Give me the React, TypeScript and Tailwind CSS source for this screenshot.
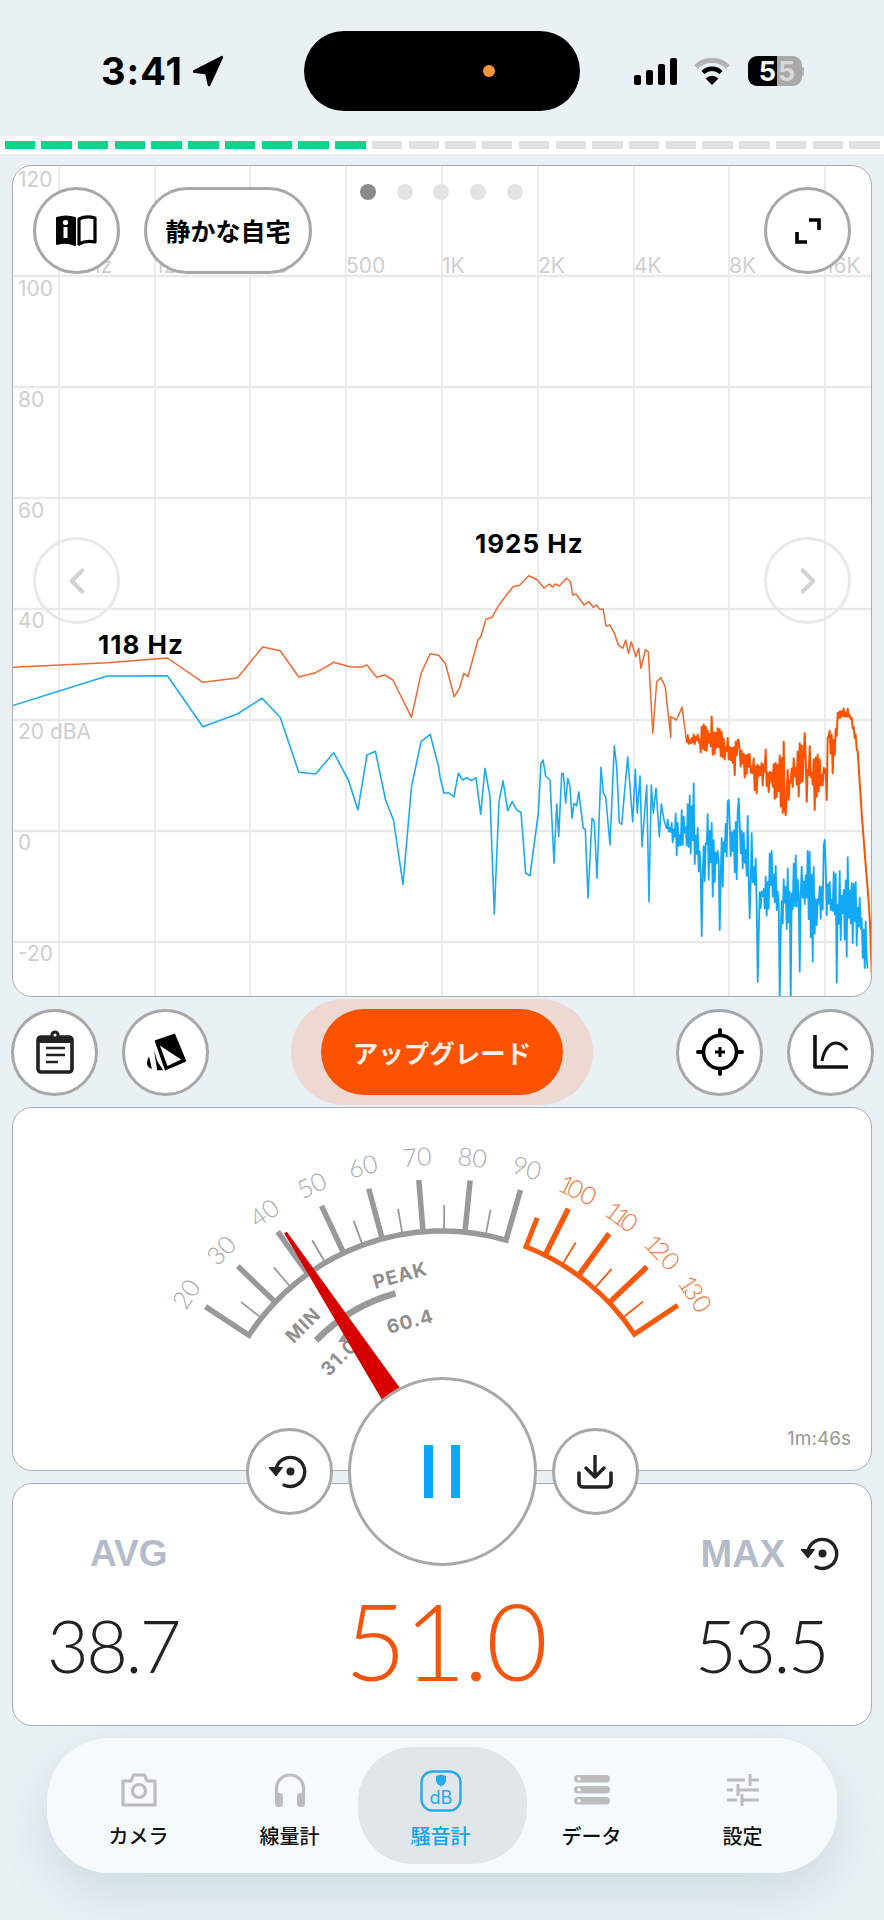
import type { ReactNode } from 'react'
import { ChevronLeft, ChevronRight } from 'lucide-react'

type Pt = [number, number]
type Env = [number, number, number]

// zoomed traces of the two spectrum lines, converted to page pixels below
const wide = ([x, y]: Pt): Pt => [x / 1.774, y / 3 + 500]
const fine = ([x, y]: Pt): Pt => [x / 3 + 440, y / 3 + 680]

const orangeLow: Pt[] = [[22,502],[190,488],[297,474],[360,547],[421,534],[466,441],[497,452],[530,531],[560,518],[592,487],[620,500],[640,502],[651,495],[668,532],[682,525],[697,540],[730,652],[747,520],[763,461],[778,466],[790,490],[806,590],[815,565],[823,520],[830,530],[848,420],[853,410],[862,358],[873,352],[885,315],[910,260],[922,256],[938,227],[952,238],[965,264],[975,252],[980,262],[985,252],[992,258],[1005,235],[1012,245],[1016,285],[1022,282],[1036,315],[1045,305],[1052,322],[1058,315],[1064,328],[1070,328],[1075,378],[1082,375],[1090,400],[1097,435],[1105,445],[1110,420],[1115,460],[1120,425],[1128,470],[1133,445],[1137,505],[1145,450],[1150,455],[1158,700],[1165,545],[1172,533],[1180,560],[1190,712],[1190,650],[1200,660],[1210,622]]
const orangeEnv: Env[] = [[740,165,210],[770,150,210],[815,110,240],[860,165,240],[900,180,280],[950,235,340],[975,205,340],[1005,250,370],[1030,185,405],[1050,250,360],[1080,190,350],[1095,160,380],[1130,220,390],[1160,180,355],[1165,140,180],[1180,145,280],[1195,75,120],[1225,80,120],[1240,120,150],[1255,210,250]]
const orangeSpikes: Pt[] = [[815,110],[885,285],[895,180],[950,340],[1030,185],[1036,405],[1080,190],[1095,160],[1125,390],[1160,360],[1178,280]]
const orangeEnd: Pt[] = [[1265,400],[1275,530],[1285,650],[1290,730],[1295,880]]

const blueLow: Pt[] = [[22,617],[190,528],[297,527],[360,680],[421,642],[465,595],[497,652],[530,817],[560,822],[592,758],[618,840],[635,930],[651,765],[666,754],[684,900],[698,960],[715,1153],[730,860],[747,725],[763,703],[778,800]]
const blueMid: Pt[] = [[0,290],[12,340],[25,338],[42,350],[55,280],[68,300],[80,293],[95,302],[108,293],[122,403],[135,265],[150,350],[163,703],[177,365],[189,302],[203,392],[217,365],[230,390],[243,397],[257,580],[270,587],[295,400],[303,250],[309,240],[317,288],[330,300],[342,550],[350,372],[356,470],[365,282],[370,280],[377,370],[383,295],[390,320],[396,415],[402,370],[410,378],[416,335],[430,445],[436,447],[444,655],[456,415],[463,425],[471,595],[483,262],[490,340],[497,350],[510,495],[523,198],[530,260],[538,428],[545,433],[563,230],[578,425],[586,268],[592,400],[600,288],[606,500],[620,315],[627,665],[634,315],[640,400],[648,325],[658,470],[664,372],[672,420]]
const blueEnv: Env[] = [[680,395,495],[720,395,550],[760,310,530],[785,480,700],[800,395,580],[830,390,700],[865,360,600],[900,355,600],[940,440,700],[950,550,800],[1000,475,720],[1020,530,800],[1050,535,800],[1065,490,780],[1095,495,790],[1130,545,800],[1155,480,800],[1190,560,800],[1230,515,800],[1260,590,820],[1275,680,870],[1285,880,920]]
const blueSpikes: Pt[] = [[760,310],[785,768],[838,750],[865,360],[895,355],[930,715],[952,905],[1020,955],[1052,955],[1080,875],[1117,845],[1155,480],[1190,908],[1220,830]]

function noisy(env: Env[], spikes: Pt[], seed: number): Pt[] {
  const out: Pt[] = []
  let s = seed
  const rnd = () => {
    s = (s * 16807) % 2147483647
    return s / 2147483647
  }
  let k = 0
  let i = 0
  for (let x = env[0][0]; x <= env[env.length - 1][0]; x += 3) {
    while (k < env.length - 2 && env[k + 1][0] < x) k++
    const t = (x - env[k][0]) / (env[k + 1][0] - env[k][0])
    const up = env[k][1] + (env[k + 1][1] - env[k][1]) * t
    const lo = env[k][2] + (env[k + 1][2] - env[k][2]) * t
    const mid = (up + lo) / 2
    const swing = ((lo - up) / 2) * Math.pow(rnd(), 1.2)
    const spike = spikes.find((p) => Math.abs(p[0] - x) <= 1.5)
    out.push([x, spike ? spike[1] : i % 2 ? mid - swing : mid + swing])
    i++
  }
  return out
}

const toPath = (pts: Pt[]) => 'M' + pts.map((p) => p[0].toFixed(1) + ' ' + p[1].toFixed(1)).join('L')

const orangeDense = noisy(orangeEnv, orangeSpikes, 4021).map(fine)
const blueDense = noisy(blueEnv, blueSpikes, 9173).map(fine)
const orangeThin = toPath([...orangeLow.map(wide), orangeDense[0]])
const orangeThick = toPath([...orangeDense, ...orangeEnd.map(fine)])
const blueThin = toPath([...blueLow.map(wide), ...blueMid.map(fine), blueDense[0]])
const blueThick = toPath(blueDense)

const gridX = [59, 155, 250, 346, 442, 538, 634, 729, 825]
const gridY = [276, 387, 498, 609, 720, 831, 942]
const dbLabels = [['120', 187], ['100', 296], ['80', 407], ['60', 518], ['40', 628], ['20 dBA', 739], ['0', 850], ['-20', 961]] as const
const freqLabels = ['63Hz', '125', '250', '500', '1K', '2K', '4K', '8K', '16K']

// gauge geometry, measured off the reference
const CX = 442
const CY = 1462
const polar = (r: number, deg: number): Pt => {
  const a = (deg * Math.PI) / 180
  return [CX + r * Math.sin(a), CY - r * Math.cos(a)]
}
const majors = [-56.7, -46.2, -35.5, -25.2, -15, -4.7, 5.7, 16.1, 26.5, 36.2, 46.4, 56.4]
const majorLabels = ['20', '30', '40', '50', '60', '70', '80', '90', '100', '110', '120', '130']
const GREY = '#999999'
const ORANGE = '#f9590d'
const line = (r1: number, r2: number, deg: number) => {
  const a = polar(r1, deg)
  const b = polar(r2, deg)
  return 'M' + a[0] + ' ' + a[1] + 'L' + b[0] + ' ' + b[1]
}
const arcShape = (from: number, to: number, startR = 283) => {
  const a = polar(startR, from)
  const b = polar(231, from)
  const c = polar(231, to)
  const d = polar(283, to)
  return `M${a[0]} ${a[1]}L${b[0]} ${b[1]}A231 231 0 0 1 ${c[0]} ${c[1]}L${d[0]} ${d[1]}`
}
const peakStart = polar(175, -46)
const peakEnd = polar(175, -15.4)

function Round({ children, className = 'w-[87px]' }: { children?: ReactNode; className?: string }) {
  return (
    <div className={`flex h-[87px] shrink-0 items-center justify-center rounded-full border-[3px] border-[#a8a8a8] bg-white ${className}`}>
      {children}
    </div>
  )
}

function ResetIcon({ className }: { className?: string }) {
  return (
    <svg viewBox="0 0 40 36" className={className}>
      <path d="M7 15A14.5 14.5 0 1 1 15 31" fill="none" stroke="#222" strokeWidth="3.4" strokeLinecap="round" />
      <path d="M0 13.5H13.5L7 22Z" fill="#222" stroke="#222" strokeLinejoin="round" />
      <circle cx="21.5" cy="17.5" r="4" fill="#222" />
    </svg>
  )
}

function StatusBar() {
  return (
    <div className="flex h-[136px] items-start pt-[31px]">
      <div className="flex h-[80px] w-[304px] items-center pl-[101px]">
        <span className="text-[38px] font-bold leading-none tracking-[1px] text-black [font-family:Inter,sans-serif]">3:41</span>
        <svg viewBox="0 0 30 30" className="ml-[9px] h-[32px] w-[32px]">
          <path d="M28 2L2 15.5L13.5 17L16 28Z" fill="#000" stroke="#000" strokeWidth="2.5" strokeLinejoin="round" />
        </svg>
      </div>
      <div className="flex h-[80px] w-[276px] items-center rounded-full bg-black pl-[179px]">
        <div className="h-[12px] w-[12px] rounded-full bg-[#f7963a]" />
      </div>
      <div className="flex h-[80px] items-center pl-[54px]">
        <div className="flex h-[27px] items-end gap-[5px]">
          <div className="h-[10px] w-[7px] rounded-[2px] bg-black" />
          <div className="h-[15px] w-[7px] rounded-[2px] bg-black" />
          <div className="h-[21px] w-[7px] rounded-[2px] bg-black" />
          <div className="h-[27px] w-[7px] rounded-[2px] bg-black" />
        </div>
        <svg viewBox="0 0 38 28" className="ml-[16px] h-[28px] w-[38px]">
          <path d="M3 10C12 1 26 1 35 10" fill="none" stroke="#b3b3b3" strokeWidth="5" />
          <path d="M10 15.5C15 10.5 23 10.5 28 15.5" fill="none" stroke="#000" strokeWidth="4.5" />
          <path d="M12.5 21.5Q19 16 25.5 21.5L19 28Z" fill="#000" />
        </svg>
        <div className="ml-[17px] flex h-[30px] w-[54px] overflow-hidden rounded-[9px] text-[27px] font-bold leading-none [font-family:Inter,sans-serif]">
          <div className="flex w-[29px] items-center justify-end bg-black pr-[1px] text-white">5</div>
          <div className="flex flex-1 items-center bg-[#a9a9a9] pl-[1px] text-[#d9d9d9]">5</div>
        </div>
        <div className="h-[9px] w-[2px] rounded-r-full bg-[#b3b3b3]" />
      </div>
    </div>
  )
}

function ProgressStrip() {
  return (
    <div className="flex h-[18px] items-center gap-[6.35px] bg-white pl-[4.5px]">
      {Array.from({ length: 24 }, (_, i) => (
        <div key={i} className={`h-[8px] w-[30.4px] shrink-0 ${i < 10 ? 'bg-[#0fd38a]' : 'bg-[#e0e0e0]'}`} />
      ))}
    </div>
  )
}

function SpectrumChart() {
  return (
    <div className="relative mx-[12px] mt-[11px] h-[832px] overflow-hidden rounded-[20px] border border-[#a9adb0] bg-white">
      <svg viewBox="13 166 858 830" className="block h-full w-full">
        {gridX.map((x) => (
          <line key={x} x1={x} x2={x} y1={166} y2={996} stroke="#ececec" strokeWidth="2" />
        ))}
        {gridY.map((y) => (
          <line key={y} x1={13} x2={871} y1={y} y2={y} stroke="#e9e9e9" strokeWidth="2.5" />
        ))}
        <g fill="#cfcfcf" fontSize="21" fontFamily="Inter, sans-serif">
          {dbLabels.map(([t, y]) => (
            <text key={t} x={18} y={y}>{t}</text>
          ))}
          {freqLabels.map((t, i) => (
            <text key={t} x={gridX[i]} y={273}>{t}</text>
          ))}
        </g>
        <g fill="none" strokeLinejoin="round">
          <path d={orangeThin} stroke="#ee6a32" strokeWidth="1.5" />
          <path d={orangeThick} stroke="#fb5200" strokeWidth="2" />
          <path d={blueThin} stroke="#1eaaf1" strokeWidth="1.6" />
          <path d={blueThick} stroke="#12a8f6" strokeWidth="1.8" />
        </g>
        <g fill="#000" fontSize="26" fontWeight="700" letterSpacing="1" fontFamily="Inter, sans-serif">
          <text x={475} y={553}>1925 Hz</text>
          <text x={98} y={654}>118 Hz</text>
        </g>
      </svg>

      <div className="absolute left-[20px] right-[20px] top-[21px] flex items-start gap-[24px]">
        <Round>
          <svg viewBox="0 0 41 31" className="h-[31px] w-[41px]">
            <path d="M1 3Q10 0 19 3V30Q10 26 1 29Z" fill="#000" stroke="#000" strokeWidth="2" strokeLinejoin="round" />
            <circle cx="9.5" cy="7.5" r="2.6" fill="#fff" />
            <rect x="7.5" y="12" width="4" height="11" fill="#fff" />
            <path d="M23 4Q30 0.5 39 3V27Q30 25 23 29Z" fill="none" stroke="#000" strokeWidth="3.2" strokeLinejoin="round" />
          </svg>
        </Round>
        <Round className="w-[168px] text-[25px] font-bold text-black [font-family:'Noto_Sans_CJK_JP',sans-serif]">静かな自宅</Round>
        <Round className="ml-auto w-[87px]">
          <svg viewBox="0 0 28 28" className="h-[28px] w-[28px]">
            <path d="M15 3H25V13M3 15V25H13" fill="none" stroke="#000" strokeWidth="3.6" />
          </svg>
        </Round>
      </div>

      <div className="absolute left-[347px] top-[18px] flex gap-[20.7px]">
        <div className="h-[16px] w-[16px] rounded-full bg-[#8a8a8a]" />
        <div className="h-[16px] w-[16px] rounded-full bg-[#e4e4e4]" />
        <div className="h-[16px] w-[16px] rounded-full bg-[#e4e4e4]" />
        <div className="h-[16px] w-[16px] rounded-full bg-[#e4e4e4]" />
        <div className="h-[16px] w-[16px] rounded-full bg-[#e4e4e4]" />
      </div>

      <div className="absolute left-[20px] right-[20px] top-[371px] flex justify-between">
        <div className="flex h-[87px] w-[87px] items-center justify-center rounded-full border-[3px] border-[#e9e9e9]">
          <ChevronLeft className="h-[42px] w-[42px] text-[#d2d2d2]" strokeWidth={2.4} />
        </div>
        <div className="flex h-[87px] w-[87px] items-center justify-center rounded-full border-[3px] border-[#e9e9e9]">
          <ChevronRight className="h-[42px] w-[42px] text-[#d2d2d2]" strokeWidth={2.4} />
        </div>
      </div>
    </div>
  )
}

function ToolRow() {
  return (
    <div className="mt-[12px] flex h-[86px] items-center px-[11px]">
      <Round>
        <svg viewBox="0 0 38 44" className="h-[44px] w-[38px]">
          <rect x="2" y="7" width="34" height="35" rx="3" fill="#fff" stroke="#222" strokeWidth="3.6" />
          <rect x="2" y="6" width="34" height="7" rx="2" fill="#222" />
          <circle cx="19" cy="5" r="4.6" fill="#222" />
          <circle cx="19" cy="5" r="1.6" fill="#fff" />
          <path d="M10 18H29M10 25H29M10 32H22" stroke="#222" strokeWidth="2.6" />
        </svg>
      </Round>
      <Round className="ml-[24px] w-[87px]">
        <svg viewBox="370 45 130 120" className="h-[40px] w-[43px]">
          <path d="M405 72L462 52L495 132L435 158Z" fill="#000" stroke="#000" strokeWidth="5" strokeLinejoin="round" />
          <path d="M418 85L482 128L441 147Z" fill="#fff" />
          <path d="M400 98L410 132L428 160L410 160Z" fill="#000" />
          <path d="M385 118L394 156Q370 150 385 118Z" fill="#000" />
        </svg>
      </Round>
      <div className="-my-[10px] ml-[82px] rounded-full bg-[#edd9d2] px-[30px] py-[10px]">
        <div className="flex h-[86px] w-[242px] items-center justify-center rounded-full bg-[#fb5200] text-[25.5px] font-bold text-[#fdeee6] [font-family:'Noto_Sans_CJK_JP',sans-serif]">
          アップグレード
        </div>
      </div>
      <Round className="ml-[83px] w-[87px]">
        <svg viewBox="0 0 48 48" className="h-[48px] w-[48px]">
          <circle cx="24" cy="24" r="16.5" fill="none" stroke="#000" strokeWidth="3.6" />
          <path d="M24 2V7M24 41V46M2 24H7M41 24H46" stroke="#000" strokeWidth="4" strokeLinecap="round" />
          <path d="M19 24H29M24 19V29" stroke="#000" strokeWidth="3" />
        </svg>
      </Round>
      <Round className="ml-[24px] w-[87px]">
        <svg viewBox="0 0 36 36" className="h-[36px] w-[36px]">
          <path d="M2 1V33H35" fill="none" stroke="#111" strokeWidth="3.6" strokeLinejoin="round" />
          <path d="M9 27C11 15 17 9 23 9C28 9 31 12 34 16" fill="none" stroke="#111" strokeWidth="3" />
        </svg>
      </Round>
    </div>
  )
}

function Gauge() {
  return (
    <svg viewBox="13 1108 858 362" className="block h-full w-full">
      <g fill="none" strokeLinejoin="miter">
        <path d={arcShape(-56.7, 16.1)} stroke={GREY} strokeWidth="5.5" />
        <path d={arcShape(21.3, 56.4, 262)} stroke={ORANGE} strokeWidth="5" />
      </g>
      {majors.slice(1, 7).map((d) => (
        <path key={d} d={line(229, 283, d)} stroke={GREY} strokeWidth="5.5" />
      ))}
      {majors.slice(8, 11).map((d) => (
        <path key={d} d={line(229, 283, d)} stroke={ORANGE} strokeWidth="5.5" />
      ))}
      {majors.slice(0, -1).map((d, i) =>
        i === 7 ? null : (
          <path key={d} d={line(232, 257, (d + majors[i + 1]) / 2)} stroke={i < 7 ? GREY : ORANGE} strokeWidth="1.8" />
        )
      )}
      <g fontFamily="Lato, sans-serif" fontSize="25" fontWeight="300" textAnchor="middle">
        {majors.map((d, i) => {
          const [x, y] = polar(i < 8 ? 306 : 304, d)
          return (
            <text key={d} x={x} y={y + 9} transform={`rotate(${d} ${x} ${y})`} fill={i < 8 ? '#aaaaaa' : '#f0793d'}>
              {majorLabels[i].split('').map((c, j) => (
                <tspan key={j} letterSpacing={c === '1' ? -5 : 0}>{c}</tspan>
              ))}
            </text>
          )
        })}
      </g>
      <path d={`M${peakStart[0]} ${peakStart[1]}A175 175 0 0 1 ${peakEnd[0]} ${peakEnd[1]}`} fill="none" stroke={GREY} strokeWidth="6.5" />
      <path d="M344 1333L338 1342L347 1342Z" fill={GREY} />
      <g fill="#8f8f8f" fontFamily="Inter, sans-serif" fontWeight="700" fontSize="19" textAnchor="middle" letterSpacing="1">
        <text x={400} y={1282} transform="rotate(-15 400 1275)">PEAK</text>
        <text x={303} y={1332} transform="rotate(-45 303 1325)">MIN</text>
        <text x={410} y={1328} transform="rotate(-15 410 1321)">60.4</text>
        <text x={339} y={1364} transform="rotate(-45 339 1357)">31.0</text>
      </g>
      <path d="M284 1233L287 1232L405 1395L385 1405Z" fill="#d60000" />
    </svg>
  )
}

function Meter() {
  return (
    <div className="relative mx-[12px] mt-[12px]">
      <div className="relative h-[364px] rounded-[20px] border border-[#a9adb0] bg-white">
        <Gauge />
        <span className="absolute right-[20px] top-[319px] text-[19px] leading-[24px] text-[#999] [font-family:Inter,sans-serif]">1m:46s</span>
      </div>

      <div className="mt-[12px] grid h-[243px] grid-cols-[1fr_auto_1fr] rounded-[20px] border border-[#a9adb0] bg-white">
        <div className="flex flex-col items-start pl-[34px] pt-[48px]">
          <span className="ml-[43px] text-[37px] font-bold leading-[44px] text-[#b4bccb] [font-family:'Liberation_Sans',sans-serif]">AVG</span>
          <span className="mt-[27px] text-[72px] font-light leading-[84px] tracking-[-2.5px] text-[#222] [font-family:Lato,sans-serif]">38.7</span>
        </div>
        <div className="ml-[6px] flex flex-col pt-[90px]">
          <span className="text-[107px] font-light leading-[132px] tracking-[-2.5px] text-[#f4550d] [font-family:Lato,sans-serif]">51.0</span>
        </div>
        <div className="flex flex-col items-end pr-[44px] pt-[48px]">
          <div className="-mr-[14px] flex items-center gap-[16px]">
            <span className="text-[38px] font-bold leading-[44px] text-[#b4bccb] [font-family:'Liberation_Sans',sans-serif]">MAX</span>
            <ResetIcon className="h-[36px] w-[40px]" />
          </div>
          <span className="mt-[27px] text-[72px] font-light leading-[84px] tracking-[-2.5px] text-[#222] [font-family:Lato,sans-serif]">53.5</span>
        </div>
      </div>

      {/* record controls sit across both cards */}
      <div className="absolute left-0 right-0 top-[270px] flex items-center justify-center gap-[15px]">
        <Round>
          <ResetIcon className="h-[36px] w-[40px]" />
        </Round>
        <div className="flex h-[189px] w-[189px] items-center justify-center gap-[18px] rounded-full border-[3px] border-[#a8a8a8] bg-white">
          <div className="h-[53px] w-[9px] bg-[#0aa8f7]" />
          <div className="h-[53px] w-[9px] bg-[#0aa8f7]" />
        </div>
        <Round>
          <svg viewBox="0 0 36 34" className="h-[34px] w-[36px]">
            <path d="M18 1V21M9 13L18 22L27 13" fill="none" stroke="#222" strokeWidth="3.4" strokeLinecap="round" strokeLinejoin="round" />
            <path d="M2 18V28A4 4 0 0 0 6 32H30A4 4 0 0 0 34 28V18" fill="none" stroke="#222" strokeWidth="3.6" strokeLinecap="round" />
          </svg>
        </Round>
      </div>
    </div>
  )
}

const GREY_ICON = '#bcbcbc'

const tabs: { label: string; active?: boolean; icon: ReactNode }[] = [
  {
    label: 'カメラ',
    icon: (
      <svg viewBox="0 0 36 34" className="h-[34px] w-[36px]">
        <path d="M2 8H10L12.5 2H23.5L26 8H34V32H2Z" fill="none" stroke={GREY_ICON} strokeWidth="3.2" strokeLinejoin="round" />
        <circle cx="18" cy="18" r="6.5" fill="none" stroke={GREY_ICON} strokeWidth="3.2" />
      </svg>
    ),
  },
  {
    label: '線量計',
    icon: (
      <svg viewBox="0 0 32 34" className="h-[34px] w-[32px]">
        <path d="M2.5 24V15.5A13.5 13.5 0 0 1 29.5 15.5V24" fill="none" stroke={GREY_ICON} strokeWidth="3.2" />
        <rect x="1" y="20" width="8" height="14" rx="3.5" fill={GREY_ICON} />
        <rect x="23" y="20" width="8" height="14" rx="3.5" fill={GREY_ICON} />
      </svg>
    ),
  },
  {
    label: '騒音計',
    active: true,
    icon: (
      <svg viewBox="0 0 42 42" className="-mt-[3px] mb-[-4px] h-[42px] w-[42px]">
        <rect x="1.5" y="1.5" width="39" height="39" rx="11" fill="none" stroke="#27a9ef" strokeWidth="2.4" />
        <path d="M16 6L21 4.5L26 6V10.5Q26 14 21 16.5Q16 14 16 10.5Z" fill="#27a9ef" />
        <text x="21" y="34" textAnchor="middle" fontSize="18" fill="#27a9ef" fontFamily="Inter, sans-serif">dB</text>
      </svg>
    ),
  },
  {
    label: 'データ',
    icon: (
      <svg viewBox="0 0 36 32" className="h-[32px] w-[36px]">
        {[2, 13, 24].map((y) => (
          <g key={y}>
            <rect x="0" y={y - 1} width="36" height="7.5" rx="3.75" fill={GREY_ICON} />
            <circle cx="5" cy={y + 2.7} r="1.7" fill="#fff" />
          </g>
        ))}
      </svg>
    ),
  },
  {
    label: '設定',
    icon: (
      <svg viewBox="0 0 32 32" className="h-[32px] w-[32px]">
        <path d="M0 6H18M23 6H32M23 0V12M0 16H6M11 16H32M11 10V22M0 26H10M15 26H32M15 20V32" fill="none" stroke={GREY_ICON} strokeWidth="3" />
      </svg>
    ),
  },
]

function TabBar() {
  return (
    <div className="ml-[47px] mt-[12px] flex h-[135px] w-[790px] items-center rounded-[62px] bg-[#f5fafd] pl-[18px] shadow-[0_20px_50px_rgba(140,160,175,0.28)]">
      {tabs.map((tab) => (
        <div
          key={tab.label}
          className={`flex h-[117px] flex-col items-center pr-[4px] pt-[26px] ${tab.active ? '-mx-[9px] w-[169px] rounded-[55px] bg-[#e1e6ea]' : 'w-[151px]'}`}
        >
          <div className="flex h-[34px] items-center justify-center">{tab.icon}</div>
          <span className={`mt-[15px] text-[20px] font-medium leading-[28px] [font-family:'Noto_Sans_CJK_JP',sans-serif] ${tab.active ? 'font-bold text-[#12a5ef]' : 'text-[#111]'}`}>
            {tab.label}
          </span>
        </div>
      ))}
    </div>
  )
}

export default function App() {
  return (
    <div className="h-[1920px] w-[884px] overflow-hidden bg-[#e9f1f5]">
      <StatusBar />
      <ProgressStrip />
      <SpectrumChart />
      <ToolRow />
      <Meter />
      <TabBar />
    </div>
  )
}
